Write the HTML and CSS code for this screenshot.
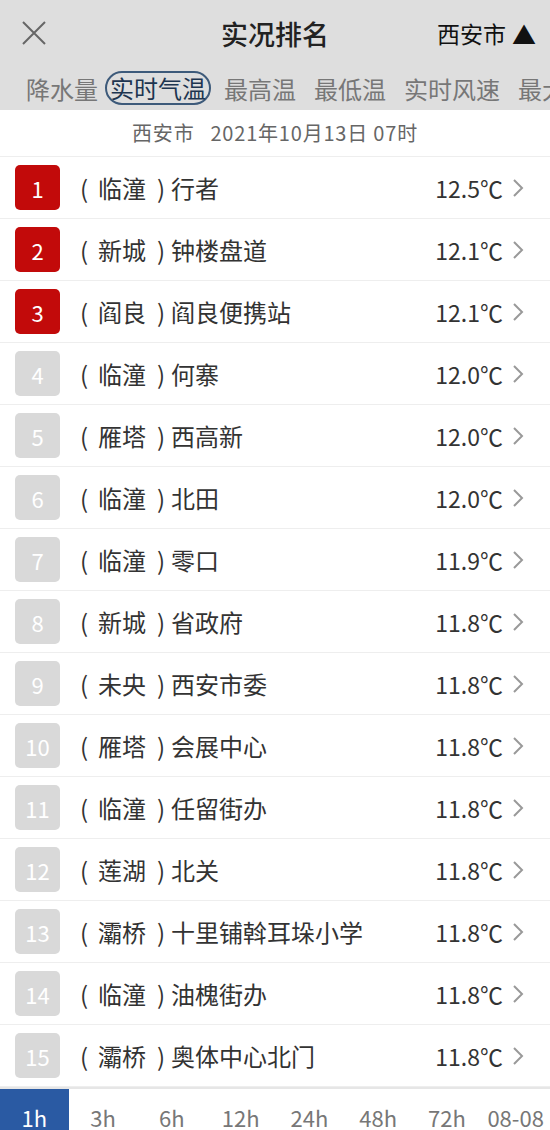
FILE: index.html
```html
<!DOCTYPE html>
<html lang="zh-CN">
<head>
    <meta charset="UTF-8">
    <meta name="viewport" content="width=device-width, initial-scale=1.0">
    <title>实况排名</title>
    <link rel="stylesheet" href="styles.css">
</head>
<body>

    <!-- 顶部栏 -->
    <div class="header">
        <div class="title-bar">
            <svg class="close" width="26" height="26" viewBox="0 0 26 26">
                <path d="M2 2 L24 24 M24 2 L2 24" stroke="#666" stroke-width="2" fill="none"/>
            </svg>
            <div class="title">实况排名</div>
            <div class="city">西安市<span class="arrow">▲</span></div>
        </div>
        <div class="tabs">
            <span class="tab">降水量</span>
            <span class="tab active">实时气温</span>
            <span class="tab">最高温</span>
            <span class="tab">最低温</span>
            <span class="tab">实时风速</span>
            <span class="tab">最大风速</span>
        </div>
    </div>

    <div class="subtitle"><span class="sub-city">西安市</span>2021年10月13日 07时</div>

    <!-- 排名列表 -->
    <ul class="list">
        <li class="row"><span class="rank top">1</span><span class="dist">临潼</span><span class="name">行者</span><span class="temp">12.5℃</span><svg class="chev" width="12" height="20" viewBox="0 0 12 20"><path d="M2 2 L10 10 L2 18" stroke="#999" stroke-width="2" fill="none"/></svg></li>
        <li class="row"><span class="rank top">2</span><span class="dist">新城</span><span class="name">钟楼盘道</span><span class="temp">12.1℃</span><svg class="chev" width="12" height="20" viewBox="0 0 12 20"><path d="M2 2 L10 10 L2 18" stroke="#999" stroke-width="2" fill="none"/></svg></li>
        <li class="row"><span class="rank top">3</span><span class="dist">阎良</span><span class="name">阎良便携站</span><span class="temp">12.1℃</span><svg class="chev" width="12" height="20" viewBox="0 0 12 20"><path d="M2 2 L10 10 L2 18" stroke="#999" stroke-width="2" fill="none"/></svg></li>
        <li class="row"><span class="rank">4</span><span class="dist">临潼</span><span class="name">何寨</span><span class="temp">12.0℃</span><svg class="chev" width="12" height="20" viewBox="0 0 12 20"><path d="M2 2 L10 10 L2 18" stroke="#999" stroke-width="2" fill="none"/></svg></li>
        <li class="row"><span class="rank">5</span><span class="dist">雁塔</span><span class="name">西高新</span><span class="temp">12.0℃</span><svg class="chev" width="12" height="20" viewBox="0 0 12 20"><path d="M2 2 L10 10 L2 18" stroke="#999" stroke-width="2" fill="none"/></svg></li>
        <li class="row"><span class="rank">6</span><span class="dist">临潼</span><span class="name">北田</span><span class="temp">12.0℃</span><svg class="chev" width="12" height="20" viewBox="0 0 12 20"><path d="M2 2 L10 10 L2 18" stroke="#999" stroke-width="2" fill="none"/></svg></li>
        <li class="row"><span class="rank">7</span><span class="dist">临潼</span><span class="name">零口</span><span class="temp">11.9℃</span><svg class="chev" width="12" height="20" viewBox="0 0 12 20"><path d="M2 2 L10 10 L2 18" stroke="#999" stroke-width="2" fill="none"/></svg></li>
        <li class="row"><span class="rank">8</span><span class="dist">新城</span><span class="name">省政府</span><span class="temp">11.8℃</span><svg class="chev" width="12" height="20" viewBox="0 0 12 20"><path d="M2 2 L10 10 L2 18" stroke="#999" stroke-width="2" fill="none"/></svg></li>
        <li class="row"><span class="rank">9</span><span class="dist">未央</span><span class="name">西安市委</span><span class="temp">11.8℃</span><svg class="chev" width="12" height="20" viewBox="0 0 12 20"><path d="M2 2 L10 10 L2 18" stroke="#999" stroke-width="2" fill="none"/></svg></li>
        <li class="row"><span class="rank">10</span><span class="dist">雁塔</span><span class="name">会展中心</span><span class="temp">11.8℃</span><svg class="chev" width="12" height="20" viewBox="0 0 12 20"><path d="M2 2 L10 10 L2 18" stroke="#999" stroke-width="2" fill="none"/></svg></li>
        <li class="row"><span class="rank">11</span><span class="dist">临潼</span><span class="name">任留街办</span><span class="temp">11.8℃</span><svg class="chev" width="12" height="20" viewBox="0 0 12 20"><path d="M2 2 L10 10 L2 18" stroke="#999" stroke-width="2" fill="none"/></svg></li>
        <li class="row"><span class="rank">12</span><span class="dist">莲湖</span><span class="name">北关</span><span class="temp">11.8℃</span><svg class="chev" width="12" height="20" viewBox="0 0 12 20"><path d="M2 2 L10 10 L2 18" stroke="#999" stroke-width="2" fill="none"/></svg></li>
        <li class="row"><span class="rank">13</span><span class="dist">灞桥</span><span class="name">十里铺斡耳垛小学</span><span class="temp">11.8℃</span><svg class="chev" width="12" height="20" viewBox="0 0 12 20"><path d="M2 2 L10 10 L2 18" stroke="#999" stroke-width="2" fill="none"/></svg></li>
        <li class="row"><span class="rank">14</span><span class="dist">临潼</span><span class="name">油槐街办</span><span class="temp">11.8℃</span><svg class="chev" width="12" height="20" viewBox="0 0 12 20"><path d="M2 2 L10 10 L2 18" stroke="#999" stroke-width="2" fill="none"/></svg></li>
        <li class="row"><span class="rank">15</span><span class="dist">灞桥</span><span class="name">奥体中心北门</span><span class="temp">11.8℃</span><svg class="chev" width="12" height="20" viewBox="0 0 12 20"><path d="M2 2 L10 10 L2 18" stroke="#999" stroke-width="2" fill="none"/></svg></li>
    </ul>

    <!-- 底部时段 -->
    <div class="periods">
        <span class="period active">1h</span>
        <span class="period">3h</span>
        <span class="period">6h</span>
        <span class="period">12h</span>
        <span class="period">24h</span>
        <span class="period">48h</span>
        <span class="period">72h</span>
        <span class="period">08-08</span>
    </div>

</body>
</html>
```

FILE: styles.css
```css
body {
    margin: 0;
    background-color: white;
    font-family: "Noto Sans CJK SC", "Noto Sans", sans-serif;
    color: #333;
    overflow: hidden;
}

.header {
    background-color: #dedede;
    height: 110px;
}

.title-bar {
    height: 66px;
    display: flex;
    align-items: center;
    position: relative;
}

.close {
    margin-left: 21px;
}

.title {
    position: absolute;
    left: 0;
    right: 0;
    text-align: center;
    font-size: 27px;
    font-weight: 500;
    color: #222;
    pointer-events: none;
}

.city {
    margin-left: auto;
    margin-right: 14px;
    font-size: 23px;
    color: #111;
    display: flex;
    align-items: center;
}

.arrow {
    font-size: 24px;
    margin-left: 6px;
}

.tabs {
    height: 44px;
    display: flex;
    align-items: center;
    white-space: nowrap;
    overflow: hidden;
    padding-left: 26px;
    gap: 18px;
    font-size: 24px;
    color: #777;
}

.tab.active {
    color: #1d3550;
    border: 2px solid #3d5a7a;
    border-radius: 18px;
    padding: 0 3px;
    line-height: 30px;
    margin: 0 -5px 0 -11px;
}

.subtitle {
    height: 46px;
    line-height: 46px;
    text-align: center;
    font-size: 20px;
    letter-spacing: 0.8px;
    color: #666;
    border-bottom: 1px solid #eee;
}

.sub-city {
    margin-right: 16px;
}

.list {
    list-style: none;
    margin: 0;
    padding: 0;
}

.row {
    height: 61px;
    display: flex;
    align-items: center;
    border-bottom: 1px solid #eee;
    padding: 0 26px 0 15px;
}

.rank {
    width: 45px;
    height: 45px;
    border-radius: 5px;
    background-color: #d9d9d9;
    color: white;
    font-size: 22px;
    display: flex;
    align-items: center;
    justify-content: center;
}

.rank.top {
    background-color: #c20a0a;
}

.dist {
    margin-left: 20px;
    font-size: 24px;
    color: #333;
}

.dist::before {
    content: "(";
    display: inline-block;
    width: 18px;
}

.dist::after {
    content: ")";
    display: inline-block;
    width: 14px;
    padding-left: 11px;
}

.name {
    font-size: 24px;
    color: #333;
}

.temp {
    margin-left: auto;
    font-size: 23px;
    color: #333;
}

.chev {
    margin-left: 9px;
}

.periods {
    display: flex;
    height: 60px;
    border-top: 2px solid #e6e6e6;
}

.period {
    flex: 1;
    text-align: center;
    padding-top: 12px;
    font-size: 22px;
    color: #777;
}

.period.active {
    background-color: #2a5aa3;
    color: white;
}
```
